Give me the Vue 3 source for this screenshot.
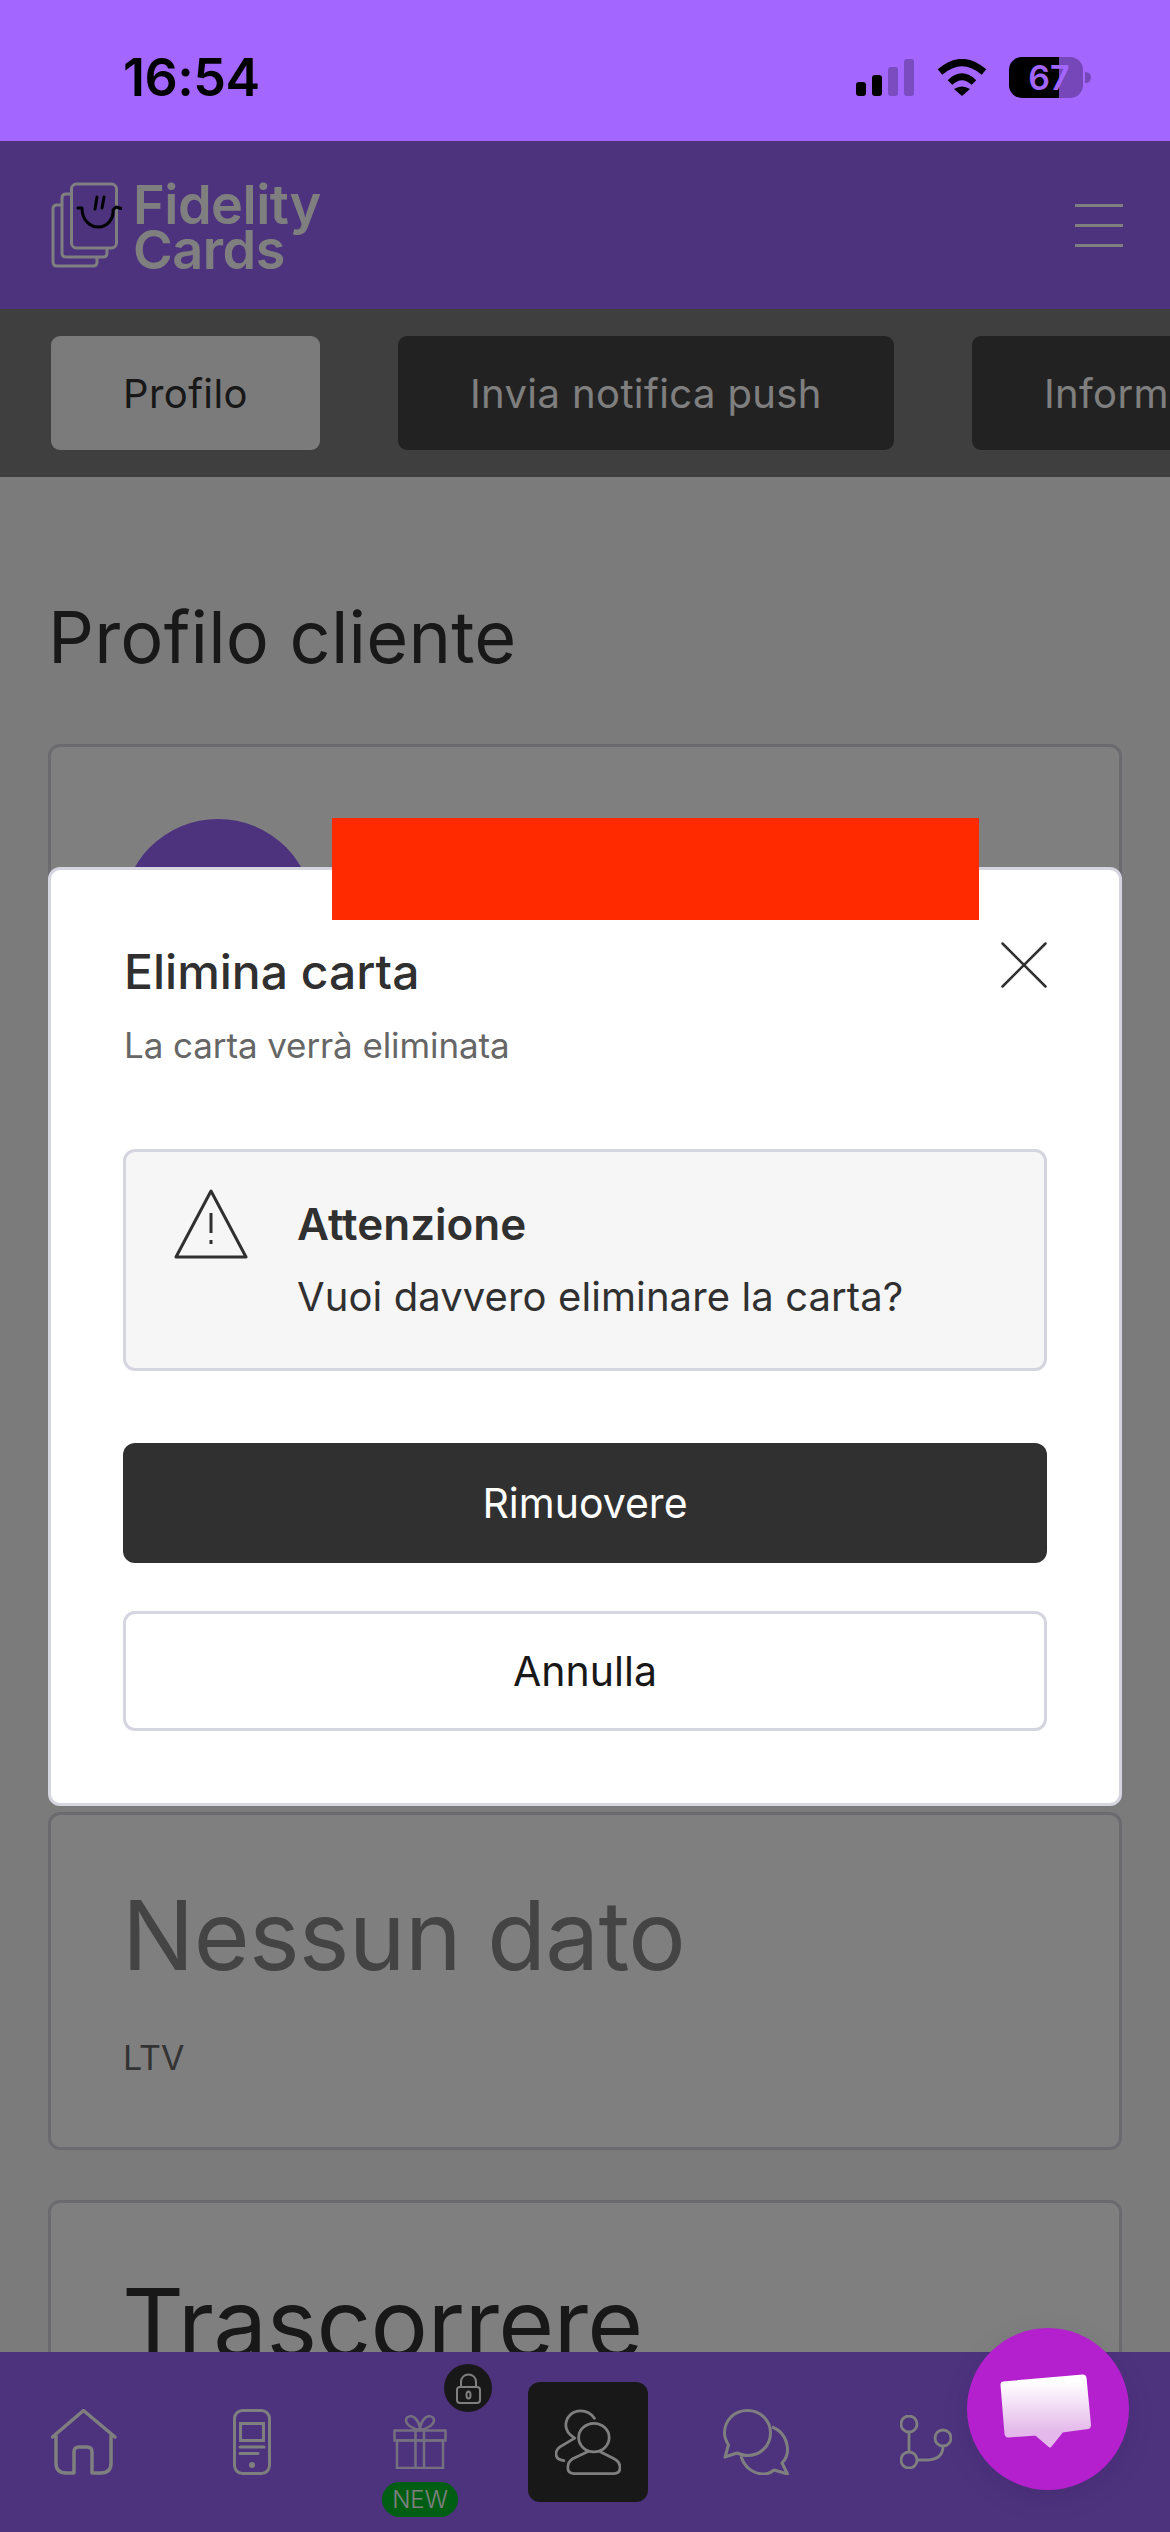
<script setup>
const tabs = [
  { label: 'Profilo', on: true },
  { label: 'Invia notifica push', on: false },
  { label: 'Informazioni', on: false },
]
</script>

<template>
  <div class="page">
    <div class="status">
      <span class="time">16:54</span>
      <div class="status-icons">
        <div class="signal">
          <i class="bar b1"></i><i class="bar b2"></i><i class="bar b3 off"></i><i class="bar b4 off"></i>
        </div>
        <svg class="wifi" width="50" height="37" viewBox="0 0 50 37">
          <path d="M3 13 Q25 -6 47 13" fill="none" stroke="#000" stroke-width="7" />
          <path d="M13 23.5 Q25 12 37 23.5" fill="none" stroke="#000" stroke-width="6.5" />
          <path d="M17 30 Q25 25 33 30 L25 37 Z" fill="#000" />
        </svg>
        <div class="battery"><span>67</span></div>
        <i class="nub"></i>
      </div>
    </div>

    <header class="header">
      <div class="logo">
        <svg width="72" height="88" viewBox="50 182 72 88" fill="none">
          <path d="M61 206 H57 Q53 206 53 210 V263 Q53 267 57 267 H93 Q97 267 97 263 V259" stroke="#fff" stroke-width="3" />
          <path d="M71 195 H66 Q62 195 62 199 V254 Q62 258 66 258 H103 Q107 258 107 254 V249" stroke="#fff" stroke-width="3" />
          <rect x="71.5" y="185" width="45" height="64" rx="5" stroke="#fff" stroke-width="3" />
          <path d="M78 209 H82 C82 222 91 228 98 228 C108 228 114 219 113 211 L116 208 L121 209.5" stroke="#000" stroke-width="3" stroke-linecap="round" stroke-linejoin="round" />
          <path d="M95 210 L97 198 M102 209 L104 198" stroke="#000" stroke-width="3" stroke-linecap="round" />
        </svg>
        <div class="logo-text">Fidelity<br />Cards</div>
      </div>
      <div class="burger"><i></i><i></i><i></i></div>
    </header>

    <nav class="tabs">
      <button v-for="t in tabs" :key="t.label" class="tab" :class="{ on: t.on }">{{ t.label }}</button>
    </nav>

    <main class="content">
      <h1 class="page-title">Profilo cliente</h1>
      <section class="card card-profile">
        <div class="avatar"></div>
      </section>
      <section class="card">
        <div class="value muted">Nessun dato</div>
        <div class="label">LTV</div>
      </section>
      <section class="card">
        <div class="value">Trascorrere</div>
      </section>
    </main>

    <div class="bottom-nav">
      <div class="cell">
        <svg width="66" height="66" viewBox="0 0 66 66" fill="none" stroke="#fff" stroke-width="3.5" stroke-linecap="round" stroke-linejoin="round">
          <path d="M1.5 28 L32.5 1.5 L64 28 M5 27 V54 Q5 64 15 64 H23 V43 Q23 38 28 38 H36 Q41 38 41 43 V64 H50 Q60 64 60 54 V27" />
        </svg>
      </div>
      <div class="cell">
        <svg width="38" height="66" viewBox="0 0 38 66" fill="none" stroke="#fff" stroke-width="3">
          <rect x="1.5" y="1.5" width="35" height="63" rx="8" />
          <rect x="7.5" y="14.5" width="23" height="17" />
          <path d="M7 38 H31 M7 44.5 H25" stroke-linecap="round" />
          <circle cx="19" cy="56" r="3" fill="#fff" stroke="none" />
        </svg>
      </div>
      <div class="cell gift">
        <svg class="gift-icon" width="54" height="54" viewBox="0 0 54 54" fill="none" stroke="#fff" stroke-width="2.5">
          <rect x="1.5" y="15.5" width="51" height="10" />
          <rect x="4" y="25.5" width="46" height="27.5" />
          <path d="M22.5 15.5 V53 M31 15.5 V53" />
          <path d="M27 15 C20 14 13 10 13 5 C13 1 19 0 22 3 C25 6 27 11 27 15 C27 11 29 6 32 3 C35 0 41 1 41 5 C41 10 34 14 27 15 Z" />
        </svg>
        <span class="lock">
          <svg width="48" height="48" viewBox="0 0 48 48" fill="none" stroke="#fff" stroke-width="2">
            <rect x="13" y="23" width="23" height="16" rx="3" />
            <path d="M17 23 V18 C17 8 32 8 32 18 V23" />
            <ellipse cx="24.5" cy="31" rx="2" ry="3.5" />
          </svg>
        </span>
        <span class="new">NEW</span>
      </div>
      <div class="cell">
        <div class="active">
          <svg width="66" height="66" viewBox="0 0 67 66" fill="none" stroke="#fff" stroke-width="2.8" stroke-linecap="round" stroke-linejoin="round">
            <ellipse cx="39.5" cy="28.5" rx="15.5" ry="14.5" />
            <path d="M33 43 L18 50 Q13 53 13 59 Q13 65 19 65 H60 Q66 65 66 59 Q66 53 60 50 L46 43" />
            <path d="M40 9 C36 3 31 1.5 26 1.5 C17 1.5 11 8 11 16 C11 22 15 26 20 29 L5 38 Q1 41 1 45 Q1 51 9 52" />
          </svg>
        </div>
      </div>
      <div class="cell">
        <svg width="66" height="66" viewBox="0 0 66 66" fill="none" stroke="#fff" stroke-width="3" stroke-linejoin="round">
          <path d="M5.5 36 C3 32 1.5 28 1.5 24 C1.5 11 11.5 1.5 24.5 1.5 C37 1.5 47.5 11 47.5 24 C47.5 37 37 46.5 24.5 46.5 C21 46.5 18 45.5 14 44 L2 48 Z" />
          <path d="M49 18 C60 22 64.5 32 64.5 41 C64.5 46 62 51 59 54 L64.5 65 L51 61 C48 63.5 44 65 41 65 C30 65 21 58 18 47" />
        </svg>
      </div>
      <div class="cell">
        <svg class="branch" width="52" height="54" viewBox="0 0 52 54" fill="none" stroke="#fff" stroke-width="2.8">
          <ellipse cx="9" cy="9" rx="8" ry="8" />
          <ellipse cx="9" cy="45" rx="8" ry="8" />
          <ellipse cx="43" cy="23" rx="8" ry="8" />
          <path d="M9 17 V37 M17 45 H26 Q43 45 43 31" />
        </svg>
      </div>
    </div>

    <div class="overlay"></div>

    <div class="modal">
      <div class="modal-head">
        <div class="modal-heading">
          <div class="modal-title">Elimina carta</div>
          <div class="modal-sub">La carta verrà eliminata</div>
        </div>
        <svg class="close" width="46" height="46" viewBox="0 0 46 46" stroke="#303030" stroke-width="2.5" stroke-linecap="round">
          <path d="M1.5 1.5 L44.5 44.5 M44.5 1.5 L1.5 44.5" />
        </svg>
      </div>
      <div class="alert">
        <svg class="warn" width="74" height="70" viewBox="0 0 74 70" fill="none" stroke="#303030" stroke-width="3" stroke-linejoin="round">
          <path d="M37 2 L72 68 H2 Z" />
          <path d="M37 24 V44 M37 51 V55" />
        </svg>
        <div>
          <div class="alert-title">Attenzione</div>
          <div class="alert-text">Vuoi davvero eliminare la carta?</div>
        </div>
      </div>
      <button class="btn primary">Rimuovere</button>
      <button class="btn secondary">Annulla</button>
    </div>

    <div class="redact"></div>

    <div class="fab">
      <svg width="92" height="75" viewBox="0 0 92 75">
        <defs>
          <linearGradient id="bubbleFill" x1="0" y1="0" x2="0" y2="1">
            <stop offset="0.08" stop-color="#ffffff" />
            <stop offset="0.8" stop-color="#e4b8ea" />
          </linearGradient>
        </defs>
        <path d="M3 10 L83 3 Q84.5 3 85 5 L89.5 52 Q89.5 54 88 54.5 L62 58 L50 73 L36 61 L8 63 Q6.5 63 6 61 L2 12 Q2 10 3 10 Z" fill="url(#bubbleFill)" stroke="url(#bubbleFill)" stroke-width="3" stroke-linejoin="round" />
      </svg>
    </div>
  </div>
</template>

<style scoped>
.page {
  position: relative;
  width: 1170px;
  height: 2532px;
  overflow: hidden;
  display: flex;
  flex-direction: column;
  background: #f6f6f6;
  font-family: Inter, "Liberation Sans", sans-serif;
  color: #303030;
}
.status {
  flex: none;
  height: 141px;
  background: #a366ff;
  display: flex;
  align-items: center;
  justify-content: space-between;
  padding: 14px 79px 0 123px;
  box-sizing: border-box;
}
.time {
  font-size: 52px;
  font-weight: 600;
  color: #000;
  letter-spacing: -0.5px;
  line-height: 56px;
}
.status-icons {
  display: flex;
  align-items: center;
}
.signal {
  display: flex;
  align-items: flex-end;
  gap: 6px;
  height: 37px;
  margin-right: 23px;
}
.bar {
  width: 10px;
  border-radius: 3px;
  background: #000;
}
.bar.off {
  background: #7a4cc0;
}
.b1 { height: 14px; }
.b2 { height: 21px; }
.b3 { height: 29px; }
.b4 { height: 37px; }
.wifi {
  margin-right: 22px;
}
.battery {
  width: 74px;
  height: 41px;
  border-radius: 13px;
  background: linear-gradient(90deg, #000 50px, #7547b8 50px);
  display: flex;
  align-items: center;
  justify-content: center;
  padding-left: 6px;
  box-sizing: border-box;
}
.battery span {
  font-size: 34px;
  font-weight: 600;
  color: #a366ff;
  line-height: 41px;
}
.nub {
  width: 6px;
  height: 11px;
  margin-left: 2px;
  border-radius: 0 6px 6px 0;
  background: #7547b8;
}
.header {
  flex: none;
  height: 168px;
  background: #9a64fc;
  display: flex;
  align-items: center;
  justify-content: space-between;
  padding: 0 47px 0 50px;
  box-sizing: border-box;
}
.logo {
  display: flex;
  align-items: center;
  gap: 11px;
}
.logo-text {
  margin-top: 4px;
  font-size: 54px;
  line-height: 45px;
  font-weight: 600;
  color: #fff;
  letter-spacing: -0.5px;
}
.burger {
  display: flex;
  flex-direction: column;
  gap: 17px;
  width: 48px;
}
.burger i {
  display: block;
  height: 3px;
  background: #fff;
}
.tabs {
  flex: none;
  height: 168px;
  background: #7e7e7e;
  display: flex;
  align-items: center;
  gap: 78px;
  padding-left: 51px;
  box-sizing: border-box;
  overflow: hidden;
}
.tab {
  flex: none;
  height: 114px;
  padding: 0 72px;
  border: none;
  border-radius: 9px;
  background: #444;
  color: #fff;
  font: 400 40px Inter, sans-serif;
  letter-spacing: 0.4px;
}
.tab.on {
  background: #f6f6f6;
  color: #303030;
}
.content {
  flex: 1;
  min-height: 0;
  overflow: hidden;
  padding: 0 48px;
}
.page-title {
  margin: 116px 0 63px;
  font-size: 72px;
  line-height: 88px;
  font-weight: 400;
  letter-spacing: 0.2px;
  color: #303030;
}
.card {
  box-sizing: border-box;
  background: #fff;
  border: 3px solid #d5d5df;
  border-radius: 12px;
  padding: 72px 72px 69px 71px;
  margin-bottom: 50px;
}
.card-profile {
  height: 1018px;
}
.avatar {
  width: 192px;
  height: 192px;
  border-radius: 50%;
  background: #9a64fc;
}
.value {
  font-size: 96px;
  line-height: 96px;
  letter-spacing: -0.7px;
  color: #303030;
}
.value.muted {
  color: #888;
}
.label {
  margin-top: 55px;
  padding-left: 1px;
  font-size: 34px;
  line-height: 40px;
  color: #666;
}
.bottom-nav {
  position: absolute;
  left: 0;
  right: 0;
  bottom: 0;
  height: 180px;
  background: #9a64fc;
  display: grid;
  grid-template-columns: repeat(6, 168px);
}
.cell {
  position: relative;
  display: flex;
  align-items: center;
  justify-content: center;
}
.active {
  width: 120px;
  height: 120px;
  border-radius: 12px;
  background: #303030;
  display: flex;
  align-items: center;
  justify-content: center;
}
.gift-icon {
  opacity: 0.8;
}
.branch {
  margin-left: 4px;
}
.lock {
  position: absolute;
  left: 108px;
  top: 12px;
  width: 48px;
  height: 48px;
  border-radius: 50%;
  background: #303030;
  display: flex;
}
.new {
  position: absolute;
  left: 46px;
  top: 130px;
  width: 76px;
  height: 35px;
  border-radius: 18px;
  background: #00bc28;
  color: #fff;
  font-size: 24px;
  font-weight: 300;
  line-height: 35px;
  text-align: center;
}
.overlay {
  position: absolute;
  left: 0;
  right: 0;
  top: 141px;
  bottom: 0;
  background: rgba(0, 0, 0, 0.5);
}
.modal {
  position: absolute;
  left: 48px;
  top: 867px;
  width: 1074px;
  box-sizing: border-box;
  background: #fff;
  border: 3px solid #d5d5df;
  border-radius: 12px;
  padding: 72px;
}
.modal-head {
  display: flex;
  justify-content: space-between;
  align-items: flex-start;
}
.modal-heading {
  padding-left: 1px;
}
.modal-title {
  font-size: 48px;
  line-height: 60px;
  font-weight: 500;
  color: #303030;
}
.modal-sub {
  margin-top: 18px;
  font-size: 35px;
  line-height: 50px;
  font-weight: 400;
  letter-spacing: -0.1px;
  color: #666;
}
.alert {
  display: flex;
  margin-top: 79px;
  background: #f6f6f6;
  border: 3px solid #d5d5df;
  border-radius: 12px;
  padding: 47px 48px 46px 48px;
  gap: 49px;
}
.warn {
  flex: none;
  margin-top: -10px;
}
.alert-title {
  font-size: 44px;
  line-height: 50px;
  font-weight: 600;
  color: #303030;
}
.alert-text {
  margin-top: 23px;
  font-size: 40px;
  line-height: 50px;
  letter-spacing: 0.1px;
  color: #303030;
}
.btn {
  display: block;
  width: 100%;
  height: 120px;
  box-sizing: border-box;
  border-radius: 12px;
  font: 400 41px Inter, sans-serif;
}
.primary {
  margin-top: 72px;
  border: none;
  background: #303030;
  color: #fff;
}
.secondary {
  margin-top: 48px;
  border: 3px solid #d5d5df;
  background: #fff;
  color: #181818;
}
.redact {
  position: absolute;
  left: 332px;
  top: 818px;
  width: 647px;
  height: 102px;
  background: #ff2a00;
}
.fab {
  position: absolute;
  left: 967px;
  top: 2328px;
  width: 162px;
  height: 162px;
  border-radius: 50%;
  background: #b520ce;
  box-shadow: 0 8px 30px rgba(0, 0, 0, 0.08);
  display: flex;
}
.fab svg {
  margin: 45px 0 0 33px;
}
</style>
